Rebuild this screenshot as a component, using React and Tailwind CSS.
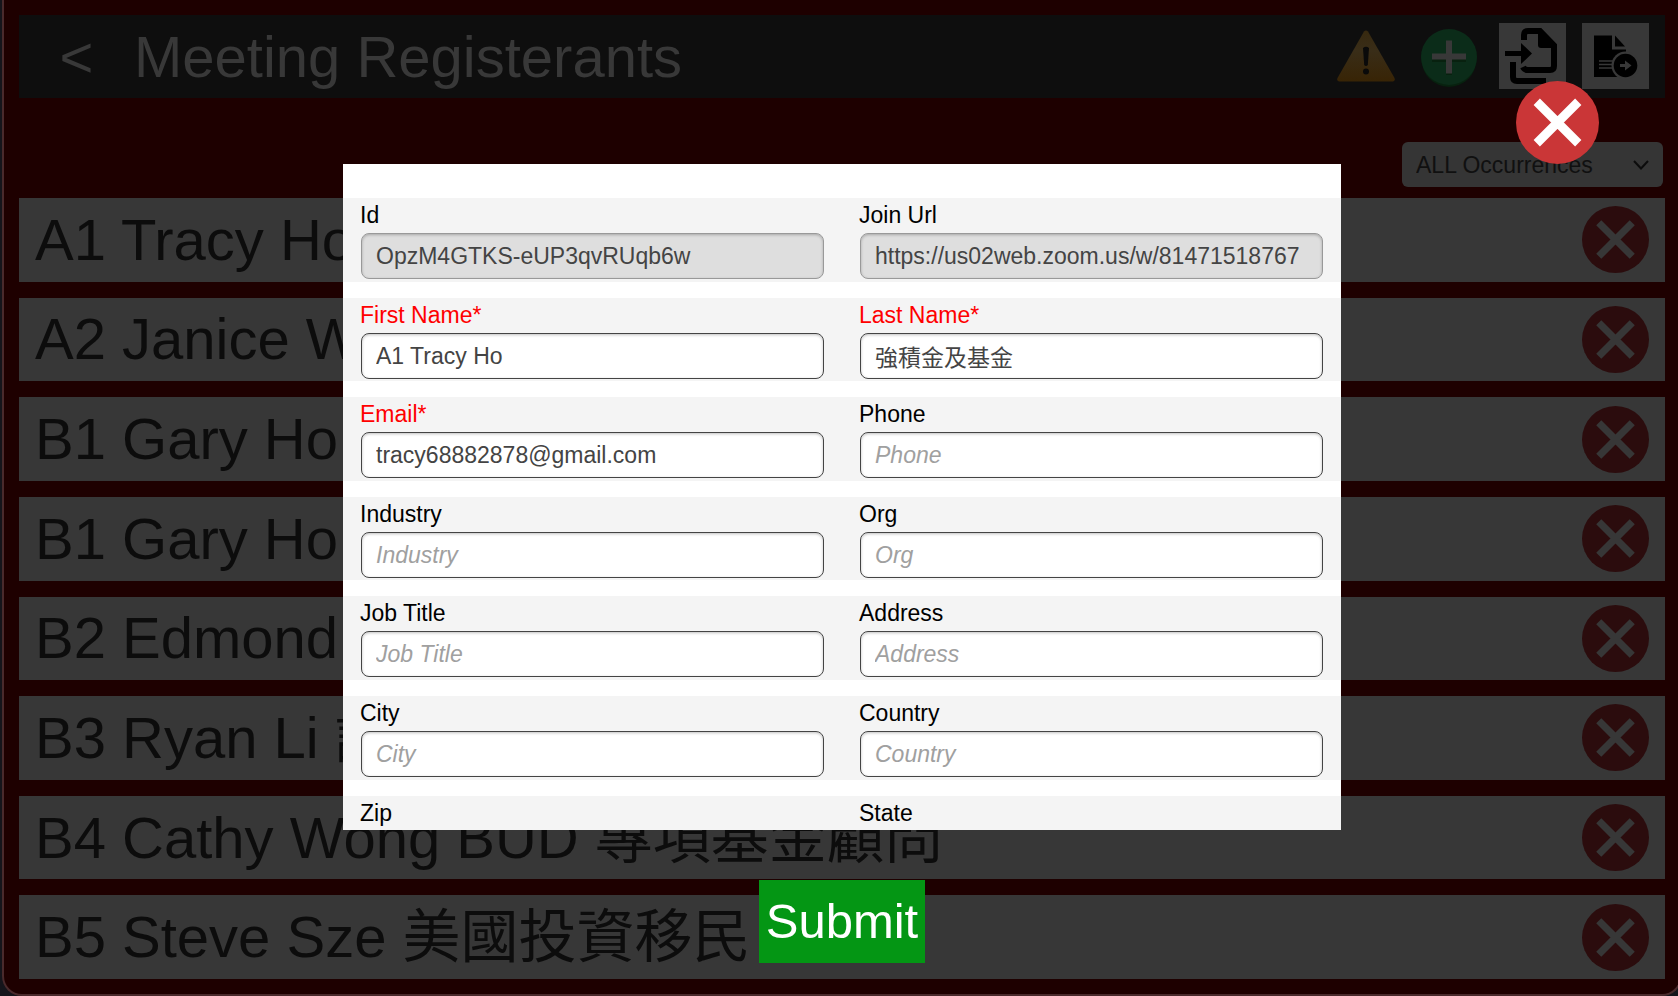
import React, { useState } from "react";

const registrants = [
  "A1 Tracy Ho 強積金及基金",
  "A2 Janice Wong",
  "B1 Gary Ho",
  "B1 Gary Ho",
  "B2 Edmond",
  "B3 Ryan Li 證券",
  "B4 Cathy Wong BUD 專項基金顧問",
  "B5 Steve Sze 美國投資移民",
];

const fields = [
  { name: "id", label: "Id", value: "OpzM4GTKS-eUP3qvRUqb6w", disabled: true },
  { name: "join_url", label: "Join Url", value: "https://us02web.zoom.us/w/81471518767", disabled: true },
  { name: "first_name", label: "First Name", value: "A1 Tracy Ho", required: true },
  { name: "last_name", label: "Last Name", value: "強積金及基金", required: true },
  { name: "email", label: "Email", value: "tracy68882878@gmail.com", required: true },
  { name: "phone", label: "Phone" },
  { name: "industry", label: "Industry" },
  { name: "org", label: "Org" },
  { name: "job_title", label: "Job Title" },
  { name: "address", label: "Address" },
  { name: "city", label: "City" },
  { name: "country", label: "Country" },
  { name: "zip", label: "Zip" },
  { name: "state", label: "State" },
];

function CrossIcon({ className, circle, cross }) {
  return (
    <svg className={className} viewBox="0 0 84 84" aria-hidden="true">
      <circle cx="42" cy="42" r="42" fill={circle} />
      <path d="M21 21 L63 63 M63 21 L21 63" stroke={cross} strokeWidth="9" />
    </svg>
  );
}

function WarningIcon() {
  return (
    <svg className="h-[52px] w-[58px]" viewBox="0 0 58 52" aria-hidden="true">
      <defs>
        <linearGradient id="warn" x1="0" y1="0" x2="0" y2="1">
          <stop offset="0" stopColor="#37290f" />
          <stop offset="0.4" stopColor="#392d18" />
          <stop offset="1" stopColor="#382405" />
        </linearGradient>
      </defs>
      <path d="M27 1.500 Q29 -0.500 31 1.500 L57.500 48 Q58.500 51 56 51.500 H2 Q-0.500 51 0.500 48 Z" fill="url(#warn)" />
      <path d="M26 18 Q29 15.500 32 18 L30.800 35 Q29 37 27.200 35 Z" fill="#0a0a0a" />
      <circle cx="29" cy="41.500" r="3" fill="#0a0a0a" />
    </svg>
  );
}

function AddIcon() {
  return (
    <svg className="h-[62px] w-14" viewBox="0 -4 56 62" aria-hidden="true">
      <ellipse cx="28" cy="30" rx="27.500" ry="28" fill="#08210f" />
      <ellipse cx="28" cy="28" rx="28" ry="28" fill="#0b2c19" />
      <path d="M11 30 H45 M28 14 V46" stroke="#08210f" strokeWidth="6" />
      <path d="M11 27.500 H45 M28 11.500 V44.500" stroke="#383838" strokeWidth="6" />
    </svg>
  );
}

function ImportIcon() {
  return (
    <svg className="h-[66px] w-[67px]" viewBox="0 0 67 66" aria-hidden="true">
      <path d="M25 17 V12 Q25 8 29 8 H41 L55 22.500 V43 Q55 47 51 47 H29 Q25.500 47 24 44" fill="none" stroke="#000" strokeWidth="6" />
      <path d="M39 6 L57 25 H42 Q39 25 39 22 Z" />
      <path d="M6 28 H22 V20 L33 30.500 L22 41 V33 H6 Z" />
      <path d="M14 39 V54 Q14 58 18 58 H47" fill="none" stroke="#000" strokeWidth="6" />
    </svg>
  );
}

function ExportIcon() {
  return (
    <svg className="h-[66px] w-[67px]" viewBox="0 0 67 66" aria-hidden="true">
      <path d="M12 12.500 H30 V26.500 H44 V54 H12 Z" />
      <path d="M33 12.500 L43 23.500 H33 Z" />
      <path d="M17 38 H32 M17 41.500 H32 M17 45 H32" stroke="#383838" strokeWidth="1.500" />
      <circle cx="43.500" cy="42.500" r="14" fill="#383838" />
      <circle cx="43.500" cy="42.500" r="11.800" />
      <path d="M38 41 H43 V37.500 L49.500 42.500 L43 47.500 V44 H38 Z" fill="#383838" />
    </svg>
  );
}

function Field({ field, value, onChange }) {
  return (
    <div className="h-[10vh] pb-4">
      <div className="h-full bg-[#f4f4f4] px-[17px] pt-[2px]">
        <label
          htmlFor={field.name}
          className={`block pb-[3px] text-[23px] leading-[30px] ${field.required ? "text-[#ff0000]" : "text-black"}`}
        >
          {field.label}
          {field.required && "*"}
        </label>
        <div className="px-px">
          <input
            id={field.name}
            className="block h-[46px] w-full rounded-lg border border-[#444] bg-white px-[14px] pt-px text-[23px] text-[#444] shadow-[inset_0_1px_3px_rgba(0,0,0,0.25)] outline-none placeholder:text-[#a0a0a0] placeholder:italic disabled:border-[#999] disabled:bg-[#dedede]"
            placeholder={field.label}
            disabled={field.disabled}
            value={value}
            onChange={(event) => onChange(field.name, event.target.value)}
          />
        </div>
      </div>
    </div>
  );
}

export default function App() {
  const [values, setValues] = useState(() => Object.fromEntries(fields.map((f) => [f.name, f.value ?? ""])));

  const onChange = (name, value) => setValues((prev) => ({ ...prev, [name]: value }));

  return (
    <div className="h-screen overflow-hidden bg-[#15151b] pl-[2px] font-['Liberation_Sans','Noto_Sans_CJK_TC',sans-serif]">
      <div className="relative -mr-1 flex h-full flex-col rounded-b-[20px] border-x-2 border-b-2 border-[#4a2a2c] bg-[#1e0000] p-[15px]">
        <header className="flex h-[83px] shrink-0 items-center bg-[#0e0e0e] pr-4 text-[#383838]">
          <button type="button" className="w-[115px] text-[58px] leading-none" aria-label="Back">
            &lt;
          </button>
          <h1 className="flex-1 text-[58px] leading-none">Meeting Registerants</h1>
          <div className="flex items-center self-start pt-2">
            <button type="button" className="mr-[26px]" aria-label="Warnings">
              <WarningIcon />
            </button>
            <button type="button" className="mr-[22px]" aria-label="Add registrant">
              <AddIcon />
            </button>
            <button type="button" className="mr-4 bg-[#383838]" aria-label="Import">
              <ImportIcon />
            </button>
            <button type="button" className="bg-[#383838]" aria-label="Export">
              <ExportIcon />
            </button>
          </div>
        </header>

        <div className="mt-11 mr-[2px] flex shrink-0 justify-end">
          <div className="relative">
            <select
              aria-label="Occurrences"
              className="h-[45px] w-[261px] appearance-none rounded-md bg-[#353535] pt-[2px] pl-[14px] text-[23px] text-[#101010]"
            >
              <option>ALL Occurrences</option>
            </select>
            <svg className="pointer-events-none absolute top-[18px] right-[14px] h-[10px] w-4" viewBox="0 0 16 10" aria-hidden="true">
              <path d="M1 1 L8 8.500 L15 1" fill="none" stroke="#0c0c0c" strokeWidth="2" />
            </svg>
          </div>
        </div>

        <ul className="mt-[11px] grid flex-1 auto-rows-fr gap-4 text-[#0c0c0c]">
          {registrants.map((name, i) => (
            <li key={i} className="flex items-center justify-between overflow-hidden bg-[#373737] px-4">
              <span className="text-[58px] leading-[66px] whitespace-nowrap">{name}</span>
              <button type="button" aria-label={`Remove ${name}`}>
                <CrossIcon className="h-[67px] w-[67px]" circle="#2b0c0d" cross="#373737" />
              </button>
            </li>
          ))}
        </ul>

        <div className="absolute inset-0 flex flex-col items-center pt-[164px]" role="dialog" aria-label="Edit registrant">
          <form className="contents" onSubmit={(event) => event.preventDefault()}>
            <div className="grid h-[666px] w-[998px] max-w-full shrink-0 auto-rows-max grid-cols-2 overflow-hidden bg-white pt-[34px]">
              {fields.map((field) => (
                <Field key={field.name} field={field} value={values[field.name]} onChange={onChange} />
              ))}
            </div>
            <button type="submit" className="mt-[50px] h-[83px] shrink-0 bg-[#049614] px-[7px] text-[49px] leading-none text-white">
              Submit
            </button>
          </form>
          <button type="button" className="absolute top-[81px] right-[81px]" aria-label="Close">
            <CrossIcon className="h-[83px] w-[83px]" circle="#ca3637" cross="#fff" />
          </button>
        </div>
      </div>
    </div>
  );
}
